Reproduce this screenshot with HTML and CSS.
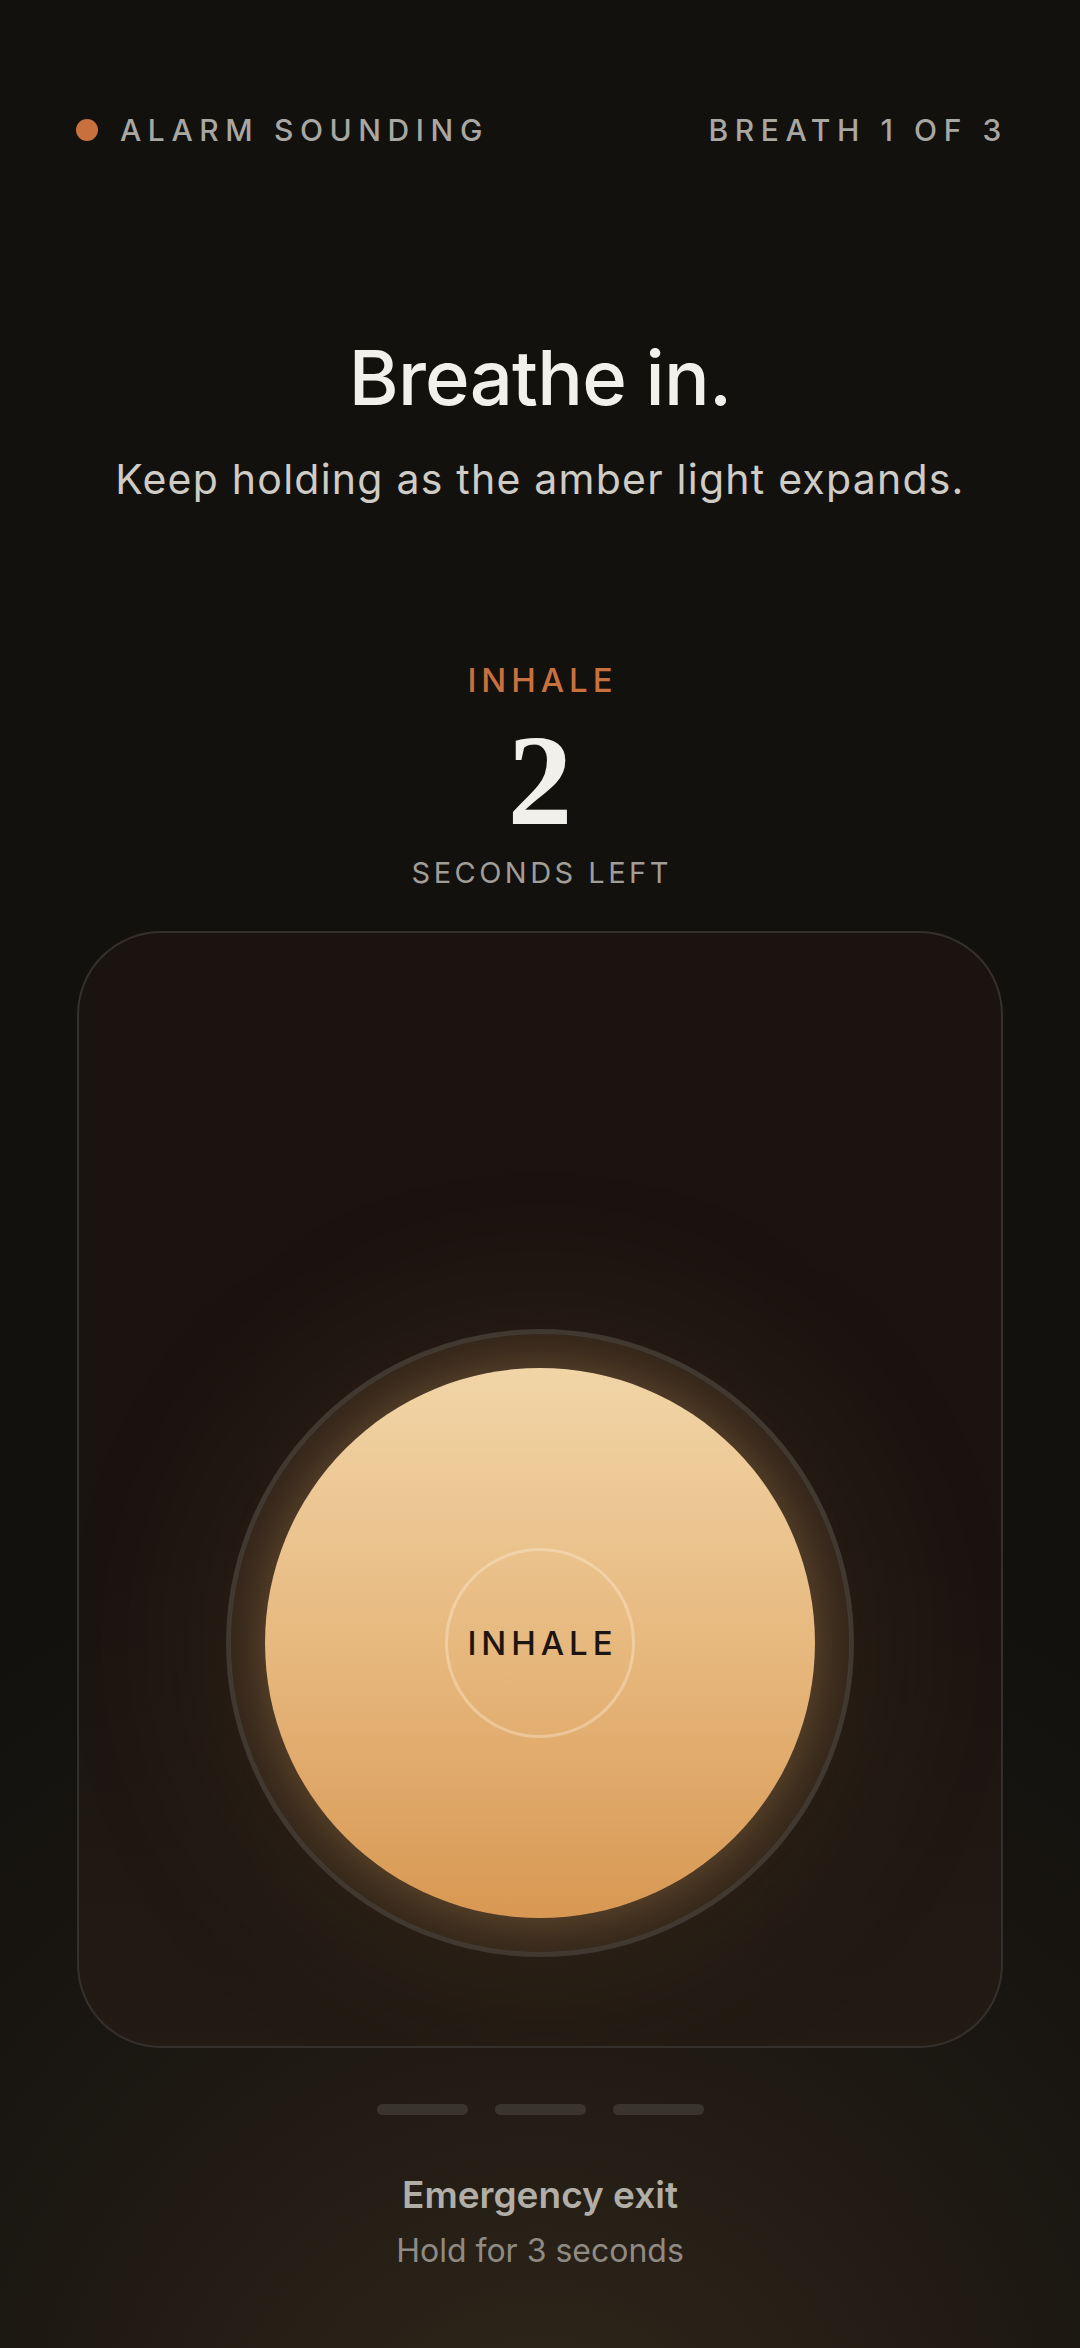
FILE: index.html
```html
<!DOCTYPE html>
<html lang="en">
<head>
<meta charset="utf-8">
<title>Breathe in</title>
<link rel="stylesheet" href="styles.css">
</head>
<body>
<main class="screen">
  <header class="status">
    <div class="status-left"><span class="dot"></span><span>ALARM SOUNDING</span></div>
    <div class="status-right">BREATH 1 OF 3</div>
  </header>

  <h1 class="title">Breathe in.</h1>
  <p class="subtitle">Keep holding as the amber light expands.</p>

  <div class="phase">INHALE</div>
  <div class="count">2</div>
  <div class="count-label">SECONDS LEFT</div>

  <section class="card">
    <div class="ring">
      <div class="orb">
        <div class="core">INHALE</div>
      </div>
    </div>
  </section>

  <div class="progress">
    <span class="bar"></span><span class="bar"></span><span class="bar"></span>
  </div>

  <div class="exit">
    <div class="exit-title">Emergency exit</div>
    <div class="exit-sub">Hold for 3 seconds</div>
  </div>
</main>
</body>
</html>
```

FILE: styles.css
```css
* { box-sizing: border-box; }
html, body { margin: 0; padding: 0; }
body {
  width: 1080px;
  height: 2348px;
  overflow: hidden;
  background-color: #12110e;
  background-image:
    radial-gradient(ellipse 1000px 1000px at 50% 2500px, rgba(62, 48, 32, 0.75), rgba(40, 32, 22, 0.45) 55%, rgba(18, 17, 14, 0) 100%);
  font-family: Inter, "Noto Sans", sans-serif;
  color: #f0eee8;
}
.screen {
  display: flex;
  flex-direction: column;
  align-items: center;
  height: 2348px;
}
.status {
  width: 100%;
  display: flex;
  justify-content: space-between;
  align-items: center;
  padding: 110px 72px 0 76px;
  font-size: 30px;
  line-height: 40px;
  letter-spacing: 0.22em;
  color: #a9a7a1;
  font-weight: 500;
}
.status-left { display: flex; align-items: center; gap: 22px; }
.dot {
  width: 22px; height: 22px; border-radius: 50%;
  background: #c8703e;
}
.title {
  margin: 182px 0 0;
  font-size: 76px;
  line-height: 90px;
  font-weight: 500;
  letter-spacing: -0.01em;
  color: #f2f0ea;
}
.subtitle {
  margin: 29px 0 0;
  font-size: 41px;
  line-height: 56px;
  font-weight: 400;
  color: #cfccc5;
  letter-spacing: 0.03em;
}
.phase {
  margin-top: 153px;
  font-size: 33px;
  line-height: 40px;
  letter-spacing: 0.15em;
  padding-left: 0.15em;
  color: #c8703e;
  font-weight: 500;
}
.count {
  margin-top: 15px;
  font-family: "Liberation Serif", "DejaVu Serif", serif;
  font-weight: 700;
  font-size: 130px;
  line-height: 130px;
  height: 130px;
  color: #f2f0ea;
}
.count-label {
  margin-top: 8px;
  font-size: 29px;
  line-height: 40px;
  letter-spacing: 0.12em;
  padding-left: 0.12em;
  color: #a19e98;
}
.card {
  margin-top: 38px;
  width: 926px;
  height: 1117px;
  border: 2px solid #35302b;
  border-radius: 84px;
  background: linear-gradient(180deg, #1b1310 0%, #1b1310 55%, #221a13 100%);
  display: flex;
  justify-content: center;
  padding-top: 396px;
  overflow: hidden;
}
.ring {
  width: 628px;
  height: 628px;
  border-radius: 50%;
  border: 5px solid #3f3730;
  display: flex;
  align-items: center;
  justify-content: center;
  background: radial-gradient(circle, rgba(90, 66, 40, 0.55) 40%, rgba(50, 38, 26, 0.6) 100%);
  box-shadow: 0 0 140px 30px rgba(120, 85, 45, 0.16);
}
.orb {
  width: 550px;
  height: 550px;
  border-radius: 50%;
  background: linear-gradient(180deg, #f1d5a7 0%, #e7b97f 50%, #d89853 100%);
  box-shadow: 0 0 40px 8px rgba(225, 170, 105, 0.22);
  display: flex;
  align-items: center;
  justify-content: center;
}
.core {
  width: 190px;
  height: 190px;
  border-radius: 50%;
  border: 3px solid rgba(255, 236, 210, 0.4);
  display: flex;
  align-items: center;
  justify-content: center;
  font-size: 33px;
  letter-spacing: 0.15em;
  padding-left: 0.15em;
  color: #1c1511;
  font-weight: 500;
}
.progress {
  margin-top: 56px;
  display: flex;
  gap: 27px;
}
.bar {
  width: 91px;
  height: 11px;
  border-radius: 6px;
  background: #3a342e;
}
.exit {
  margin-top: 58px;
  display: flex;
  flex-direction: column;
  align-items: center;
}
.exit-title {
  font-size: 37px;
  line-height: 44px;
  font-weight: 600;
  color: #b1aea7;
  letter-spacing: 0;
}
.exit-sub {
  margin-top: 14px;
  font-size: 32px;
  line-height: 40px;
  color: #8f8b84;
  letter-spacing: 0;
}
```
